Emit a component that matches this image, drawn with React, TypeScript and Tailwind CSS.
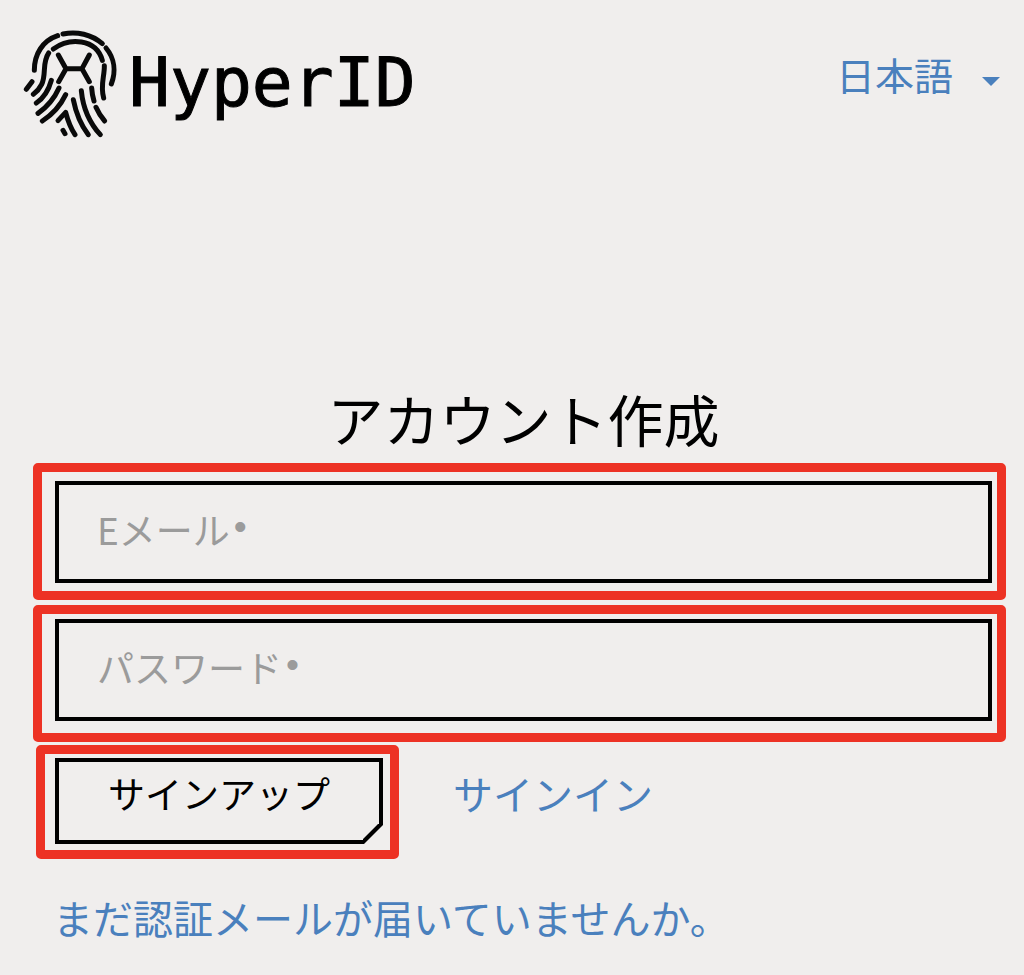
import { useState } from "react";
import type { FormEvent, ReactNode } from "react";

function Fingerprint() {
  return (
    <svg
      viewBox="0 0 360 375"
      className="h-[125px] w-[120px] shrink-0"
      fill="none"
      stroke="#0a0a0a"
      strokeWidth="15"
      strokeLinecap="round"
      strokeLinejoin="round"
      aria-hidden="true"
    >
      <path d="M73 151C73 102 98 62 143 47" />
      <path d="M159 42C200 33 245 43 277 71" />
      <path d="M288 84C314 115 318 155 304 192" />
      <path d="M130 87C178 52 258 55 277 121" />
      <path d="M116 99C95 130 110 162 95 193Q86 211 70 223" />
      <path d="M66 185L49 208" />
      <path d="M145 105L168 146H216L238 105M168 146L146 185M216 146L238 185" />
      <path d="M124 181C115 214 101 234 79 249" />
      <path d="M147 204C131 240 111 261 84 280" />
      <path d="M167 224C150 260 125 285 97 303" />
      <path d="M144 302L167 277C173 300 182 324 195 344" />
      <path d="M190 239C198 280 213 315 235 344" />
      <path d="M214 212C219 265 240 310 271 344" />
      <path d="M245 204Q246 223 252 243" />
      <path d="M283 137C284 168 270 197 281 234" />
      <path d="M258 262Q268 285 284 303" />
      <path d="M159 331L165 341" />
    </svg>
  );
}

type FieldProps = {
  id: string;
  type: string;
  label: string;
  autoComplete: string;
};

function Field({ id, type, label, autoComplete }: FieldProps) {
  return (
    <div className="relative">
      <input
        id={id}
        type={type}
        placeholder=" "
        autoComplete={autoComplete}
        required
        className="peer block h-[102px] w-full rounded-none border-4 border-black bg-transparent px-10 text-[37px] text-black outline-none"
      />
      <label
        htmlFor={id}
        className="pointer-events-none invisible absolute inset-y-0 left-[42px] flex items-center pb-2 text-[37px] leading-none text-[#9b9b9b] peer-placeholder-shown:visible"
      >
        <span>
          {label}
          <span className="ml-1 align-[6px] font-['Liberation_Sans']">•</span>
        </span>
      </label>
    </div>
  );
}

function Highlight({ className, children }: { className: string; children: ReactNode }) {
  return <div className={`rounded-[5px] border-[9px] border-[#ed3224] ${className}`}>{children}</div>;
}

export default function App() {
  const [language, setLanguage] = useState("ja");
  const submit = (event: FormEvent) => event.preventDefault();

  return (
    <div className="min-h-screen bg-[#f0eeed] font-['Noto_Sans_CJK_JP',sans-serif] text-black">
      <header className="flex items-start justify-between pt-5 pr-6 pl-[10px]">
        <a href="#" className="flex items-center">
          <Fingerprint />
          <span className="-ml-px font-['DejaVu_Sans_Mono',monospace] text-[68px] leading-none [-webkit-text-stroke:1px_black]">
            HyperID
          </span>
        </a>
        <div className="relative mt-[26px] flex items-center">
          <select
            aria-label="言語"
            value={language}
            onChange={(event) => setLanguage(event.target.value)}
            className="h-14 w-[164px] appearance-none bg-transparent text-[39px] leading-none text-[#4a80bd] outline-none"
          >
            <option value="ja">日本語</option>
          </select>
          <svg viewBox="0 0 18 9" className="pointer-events-none absolute top-[31px] right-0 h-[9px] w-[18px]" aria-hidden="true">
            <path d="M0 0H18L9 9Z" fill="#4a80bd" />
          </svg>
        </div>
      </header>

      <main className="pt-[236px] pr-[18px] pb-4 pl-[33px]">
        <h1 className="mb-2 pl-2 text-center text-[56px] leading-[74px]">アカウント作成</h1>
        <form onSubmit={submit}>
          <Highlight className="pt-[9px] pr-[5px] pb-2 pl-[13px]">
            <Field id="email" type="email" label="Eメール" autoComplete="email" />
          </Highlight>
          <Highlight className="mt-[5px] pt-[5px] pr-[5px] pb-3 pl-[13px]">
            <Field id="password" type="password" label="パスワード" autoComplete="new-password" />
          </Highlight>
          <div className="mt-[3px] ml-[3px] flex items-start">
            <Highlight className="pt-1 pr-[7px] pb-[6px] pl-[10px]">
              <button
                type="submit"
                className="relative block h-[86px] w-[328px] border-4 border-black pb-4 text-[37px] leading-none"
              >
                サインアップ
                <svg viewBox="0 0 20 20" className="absolute -right-1 -bottom-1 size-5" aria-hidden="true">
                  <path d="M20 0V20H0Z" fill="#f0eeed" />
                  <path d="M20 -2V1L1 20H-2L-4 16L16 -4Z" fill="black" />
                  <path d="M0 0H16V-1L-1 16H0Z" fill="#f0eeed" />
                </svg>
              </button>
            </Highlight>
            <a href="#" className="mt-5 ml-[54px] text-[40px] leading-[56px] text-[#4a80bd]">
              サインイン
            </a>
          </div>
        </form>
        <p className="mt-[30px] ml-5 text-[40px] leading-[56px]">
          <a href="#" className="text-[#4a80bd]">
            まだ認証メールが届いていませんか。
          </a>
        </p>
      </main>
    </div>
  );
}
